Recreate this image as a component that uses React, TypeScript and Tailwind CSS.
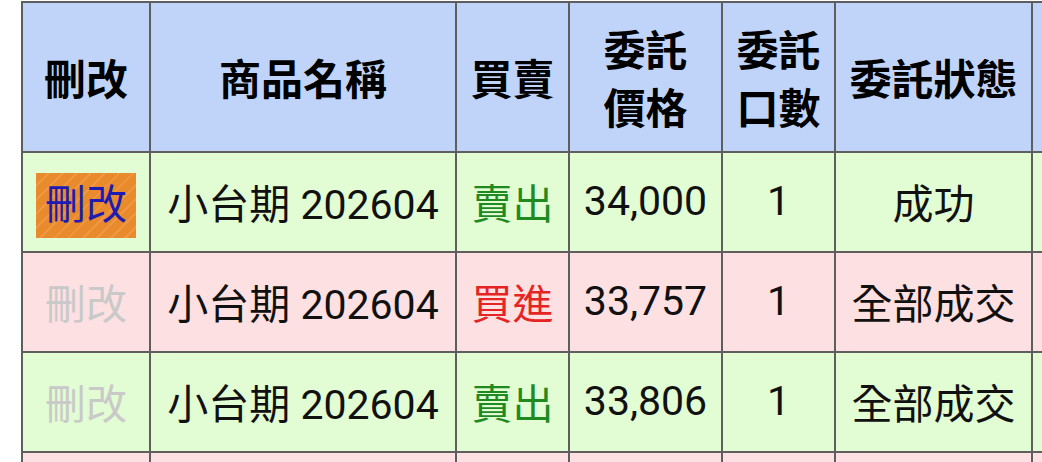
import React from 'react';

type Row = {
  editable: boolean;
  name: string;
  side: '買進' | '賣出';
  price: string;
  qty: string;
  status: string;
};

const rows: Row[] = [
  { editable: true, name: '小台期 202604', side: '賣出', price: '34,000', qty: '1', status: '成功' },
  { editable: false, name: '小台期 202604', side: '買進', price: '33,757', qty: '1', status: '全部成交' },
  { editable: false, name: '小台期 202604', side: '賣出', price: '33,806', qty: '1', status: '全部成交' },
];

const cell = 'border-2 border-[#5e5e5e] p-0 text-center align-middle';
const dataCell = 'border-2 border-[#5e5e5e] p-0 pt-[6px] text-center align-middle';

export default function App() {
  return (
    <div className="w-[1042px] h-[462px] overflow-hidden bg-white font-['Roboto','Noto_Sans_CJK_TC',sans-serif]">
      <table className="ml-[21px] mt-[1px] border-collapse table-fixed w-[1140px]">
        <colgroup>
          <col className="w-[128px]" />
          <col className="w-[306px]" />
          <col className="w-[113px]" />
          <col className="w-[153px]" />
          <col className="w-[113px]" />
          <col className="w-[197px]" />
          <col className="w-[130px]" />
        </colgroup>
        <thead>
          <tr className="h-[150px] bg-[#c0d4fa] text-[42px] font-bold text-black leading-[58px] font-['Noto_Sans_CJK_TC',sans-serif]">
            <th className={cell}>刪改</th>
            <th className={cell}>商品名稱</th>
            <th className={cell}>買賣</th>
            <th className={cell}>委託<br />價格</th>
            <th className={cell}>委託<br />口數</th>
            <th className={cell}>委託狀態</th>
            <th className={cell}></th>
          </tr>
        </thead>
        <tbody>
          {rows.map((r, i) => (
            <tr
              key={i}
              className={`h-[100px] text-[41px] leading-[48px] text-[#111] ${
                r.side === '賣出' ? 'bg-[#e2fcd3]' : 'bg-[#fde0e1]'
              }`}
            >
              <td className={dataCell}>
                {r.editable ? (
                  <span className="inline-block w-[100px] h-[65px] leading-[65px] text-[#1c1cb4] bg-[repeating-linear-gradient(135deg,#e98a2c_0px,#e98a2c_8px,#ef9843_8px,#ef9843_10px)]">
                    刪改
                  </span>
                ) : (
                  <span className="text-[#c9c9c9]">刪改</span>
                )}
              </td>
              <td className={dataCell}>{r.name}</td>
              <td className={`${dataCell} ${r.side === '賣出' ? 'text-[#1f8a1f]' : 'text-[#e52424]'}`}>{r.side}</td>
              <td className={`${cell} pb-[2px]`}>{r.price}</td>
              <td className={`${cell} pb-[2px]`}>{r.qty}</td>
              <td className={dataCell}>{r.status}</td>
              <td className={cell}></td>
            </tr>
          ))}
          {/* next row, only its top edge shows */}
          <tr className="h-[100px] bg-[#fde0e1]">
            <td className={cell}></td>
            <td className={cell}></td>
            <td className={cell}></td>
            <td className={cell}></td>
            <td className={cell}></td>
            <td className={cell}></td>
            <td className={cell}></td>
          </tr>
        </tbody>
      </table>
    </div>
  );
}
